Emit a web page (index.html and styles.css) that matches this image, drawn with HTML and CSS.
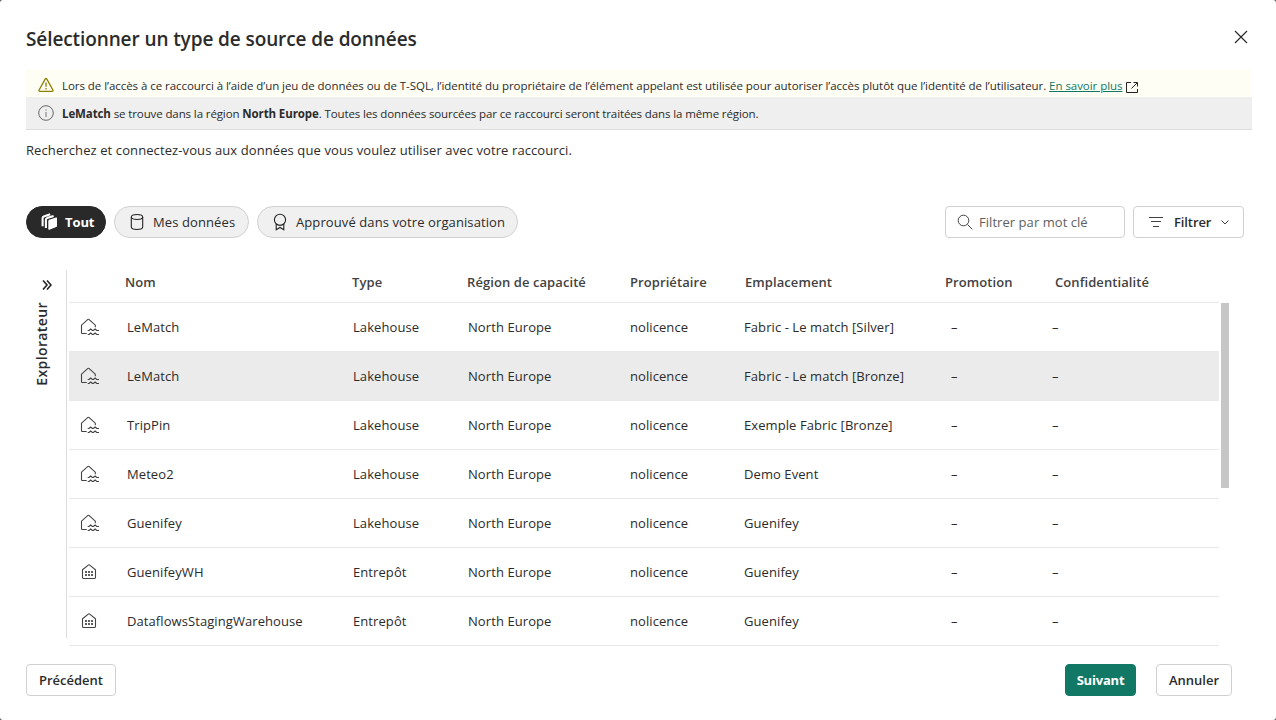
FILE: index.html
```html
<!DOCTYPE html>
<html lang="fr">
<head>
<meta charset="utf-8">
<title>Sélectionner un type de source de données</title>
<link rel="stylesheet" href="styles.css">
</head>
<body>
<svg class="defs" aria-hidden="true">
  <symbol id="lakehouse" viewBox="0 0 20 18"><path d="M7.7 15.5H3.2Q2.5 15.5 2.5 14.8V7.2L8.9 1.4Q9.4 1 9.9 1.4L16.3 7.2V9.3" fill="none" stroke="currentColor" stroke-width="1.1"/><path d="M8.7 12.5h1.3l1.7-1.5 1.7 1.5h1l1.7-1.5 1.7 1.5H20M8.7 16.5h1.3l1.7-1.5 1.7 1.5h1l1.7-1.5 1.7 1.5H20" fill="none" stroke="currentColor" stroke-width="1.2"/></symbol>
  <symbol id="warehouse" viewBox="0 0 20 18"><path d="M3.5 6.7 9.6 1.9Q10 1.6 10.4 1.9L16.5 6.7V14.6Q16.5 15.5 15.6 15.5H4.4Q3.5 15.5 3.5 14.6Z" fill="none" stroke="currentColor" stroke-width="1.1"/><path d="M6 8h2v2H6zM9 8h2v2H9zM12 8h2v2h-2zM6 11h2v2H6zM9 11h2v2H9zM12 11h2v2h-2z" fill="currentColor" fill-opacity=".85"/></symbol>
</svg>
<main class="dialog">
  <header class="dialog-head">
    <h1>Sélectionner un type de source de données</h1>
    <svg class="close" width="14" height="14" viewBox="0 0 14 14"><path d="m1 1 12 12M13 1 1 13"/></svg>
  </header>
  <div class="banner warning">
    <svg width="16" height="16" viewBox="0 0 16 16"><path d="M7.3 1.9Q8 .8 8.7 1.9L14.9 13Q15.4 14.3 14.1 14.4H1.9Q.6 14.3 1.1 13Z" fill="none" stroke="#8a8000" stroke-width="1.3"/><path d="M8 5.5v4.3M8 11v1.5" stroke="#8a8000" stroke-width="1.3"/></svg>
    <p class="warn-text">Lors de l’accès à ce raccourci à l’aide d’un jeu de données ou de T-SQL, l’identité du propriétaire de l’élément appelant est utilisée pour autoriser l’accès plutôt que l’identité de l’utilisateur. <a>En savoir plus</a></p>
    <svg class="external" width="12" height="11" viewBox="0 0 12 11"><path d="M5 .5H.5v10h11V7M7.5.5h4v4M11 1 5.5 6.5"/></svg>
  </div>
  <div class="banner info">
    <svg width="16" height="16" viewBox="0 0 16 16"><circle cx="8" cy="8" r="7.3" fill="none" stroke="#666"/><path d="M8 7v5M8 4.3v1.2" stroke="#777"/></svg>
    <p class="info-text"><b>LeMatch</b> se trouve dans la région <b>North Europe</b>. Toutes les données sourcées par ce raccourci seront traitées dans la même région.</p>
  </div>
  <p class="description">Recherchez et connectez-vous aux données que vous voulez utiliser avec votre raccourci.</p>

  <div class="toolbar">
    <button class="pill active"><svg width="18" height="18" viewBox="0 0 18 18"><path d="M8.3 8Q8.3 7 9.2 6.7L16 4.5Q17 4.2 17 5.2V12.9Q17 13.8 16.2 14.1L9.4 16.7Q8.3 17 8.3 16Z" fill="#fff"/><path d="M5.9 15V6.9Q5.9 5.6 7.1 5.1L13.6 2.9M2.6 13.2V5.2Q2.6 3.9 3.8 3.4L10.2 1.3" fill="none" stroke="#fff" stroke-width="2.1"/></svg><span>Tout</span></button>
    <button class="pill mine"><svg width="14" height="18" viewBox="0 0 14 18"><ellipse cx="7" cy="4" rx="5.7" ry="2.5"/><path d="M1.3 4v10Q1.3 16.5 7 16.5T12.7 14V4"/></svg><span>Mes données</span></button>
    <button class="pill endorsed"><svg width="14" height="18" viewBox="0 0 14 18"><circle cx="7" cy="6.8" r="5.6"/><path d="M3.2 11v5.8L7 14.5l3.8 2.3V11"/></svg><span>Approuvé dans votre organisation</span></button>
    <div class="search"><svg width="16" height="16" viewBox="0 0 16 16"><circle cx="6.5" cy="6.5" r="5.3"/><path d="m10.5 10.5 4.8 4.8"/></svg><span>Filtrer par mot clé</span></div>
    <button class="filter"><svg width="14" height="10" viewBox="0 0 14 10"><path d="M0 .5h14M2 4.5h10M4 9.5h6"/></svg><span>Filtrer</span><svg class="chev" width="8" height="5" viewBox="0 0 8 5"><path d="m.5.5 3.5 3.5L7.5.5"/></svg></button>
  </div>

  <section class="content">
    <aside class="explorer"><svg width="10" height="10" viewBox="0 0 10 10"><path d="m1 .5 4 4.5-4 4.5M5 .5 9 5 5 9.5"/></svg><span>Explorateur</span></aside>
    <div class="table">
      <div class="row head"><span></span><span>Nom</span><span>Type</span><span>Région de capacité</span><span>Propriétaire</span><span>Emplacement</span><span>Promotion</span><span>Confidentialité</span></div>
      <div class="row"><svg><use href="#lakehouse"/></svg><span>LeMatch</span><span>Lakehouse</span><span>North Europe</span><span>nolicence</span><span>Fabric - Le match [Silver]</span><span>–</span><span>–</span></div>
      <div class="row selected"><svg><use href="#lakehouse"/></svg><span>LeMatch</span><span>Lakehouse</span><span>North Europe</span><span>nolicence</span><span>Fabric - Le match [Bronze]</span><span>–</span><span>–</span></div>
      <div class="row"><svg><use href="#lakehouse"/></svg><span>TripPin</span><span>Lakehouse</span><span>North Europe</span><span>nolicence</span><span>Exemple Fabric [Bronze]</span><span>–</span><span>–</span></div>
      <div class="row"><svg><use href="#lakehouse"/></svg><span>Meteo2</span><span>Lakehouse</span><span>North Europe</span><span>nolicence</span><span>Demo Event</span><span>–</span><span>–</span></div>
      <div class="row"><svg><use href="#lakehouse"/></svg><span>Guenifey</span><span>Lakehouse</span><span>North Europe</span><span>nolicence</span><span>Guenifey</span><span>–</span><span>–</span></div>
      <div class="row"><svg><use href="#warehouse"/></svg><span>GuenifeyWH</span><span>Entrepôt</span><span>North Europe</span><span>nolicence</span><span>Guenifey</span><span>–</span><span>–</span></div>
      <div class="row"><svg><use href="#warehouse"/></svg><span>DataflowsStagingWarehouse</span><span>Entrepôt</span><span>North Europe</span><span>nolicence</span><span>Guenifey</span><span>–</span><span>–</span></div>
    </div>
    <div class="scrollbar"></div>
  </section>

  <footer class="actions">
    <button class="previous">Précédent</button>
    <button class="next">Suivant</button>
    <button class="cancel">Annuler</button>
  </footer>
</main>
</body>
</html>
```

FILE: styles.css
```css
* { box-sizing: border-box; }
body { margin: 0; background: #555; font-family: "Open Sans", "Noto Sans", sans-serif; font-size: 13px; color: #2b2b2b; }
h1, p { margin: 0; font-weight: 400; }
button { font: inherit; color: inherit; padding: 0; }
span, p, h1, button { white-space: nowrap; }
svg { flex: none; }
.defs { position: absolute; width: 0; height: 0; }
.dialog { width: 1276px; height: 720px; background: #fff; border-radius: 3px; overflow: hidden; display: flex; flex-direction: column; }

.dialog-head { height: 69px; padding: 9px 28px 0 26px; display: flex; align-items: center; justify-content: space-between; }
h1 { font-size: 19px; font-weight: 600; letter-spacing: -.1px; }
.close { fill: none; stroke: #242424; stroke-width: 1.1; margin-top: -4px; }

.banner { margin: 0 24px 0 26px; padding-left: 12px; display: flex; align-items: center; font-size: 11.5px; }
.banner p { margin-left: 8px; }
.warning { height: 28px; background: #fffef5; padding-top: 4px; }
.warning a { color: #117865; text-decoration: underline; }
.info { height: 33px; background: #efefef; border-bottom: 1px solid #ddd; }
.external { margin: 4px 0 0 4px; fill: none; stroke: #242424; }
.warn-text { letter-spacing: -.05px; }
.info-text { letter-spacing: -.11px; }
.description { height: 76px; padding: 10px 0 0 26px; line-height: 20px; letter-spacing: .1px; }

.toolbar { height: 32px; padding: 0 32px 0 26px; display: flex; gap: 8px; }
.pill { height: 32px; border: 1px solid #d1d1d1; border-radius: 16px; background: #f0f0f0; display: flex; align-items: center; letter-spacing: .1px; }
.pill svg { fill: none; stroke: #242424; stroke-width: 1.1; }
.active { width: 80px; padding-left: 13px; gap: 7px; background: #292929; border-color: #292929; color: #fff; font-weight: 700; letter-spacing: -.1px; }
.active svg { stroke: none; }
.mine { width: 135px; padding-left: 15px; gap: 9px; }
.endorsed { width: 261px; padding-left: 15px; gap: 9px; }
.search { margin-left: auto; width: 180px; height: 32px; border: 1px solid #d1d1d1; border-radius: 4px; display: flex; align-items: center; padding-left: 11px; gap: 6px; color: #616161; letter-spacing: .05px; }
.search svg, .filter svg { fill: none; stroke: #424242; }
.filter { width: 111px; height: 32px; border: 1px solid #d1d1d1; border-radius: 4px; background: #fff; font-weight: 600; display: flex; align-items: center; padding-left: 15px; letter-spacing: -.1px; }
.filter span { margin: 0 10px 0 11px; }

.content { height: 408px; display: flex; padding-top: 32px; }
.explorer { width: 67px; height: 368px; border-right: 1px solid #ddd; display: flex; flex-direction: column; align-items: center; padding: 10px 0 0 27px; gap: 12px; font-size: 14px; font-weight: 600; }
.explorer svg { fill: none; stroke: #242424; stroke-width: 1.6; }
.explorer span { writing-mode: vertical-rl; transform: rotate(180deg); margin-right: 9px; line-height: 20px; letter-spacing: .4px; }
.table { width: 1150px; margin-left: 2px; }
.row { height: 49px; display: grid; grid-template-columns: 58px 226px 115px 162px 114px 207px 101px 1fr; align-items: center; border-bottom: 1px solid #e8e8e8; letter-spacing: .08px; }
.row svg { width: 20px; height: 18px; margin-left: 10px; color: #424242; }
.head { height: 33px; grid-template-columns: 56px 227px 115px 163px 115px 200px 110px 1fr; padding-bottom: 8px; font-weight: 600; color: #424242; }
.selected { background: #ebebeb; }
.scrollbar { width: 8px; height: 185px; margin: 33px 0 0 2px; background: #c6c6c6; }

.actions { padding: 18px 44px 0 26px; display: flex; }
.actions button { height: 32px; border: 1px solid #d1d1d1; border-radius: 4px; background: #fff; font-weight: 600; }
.actions .previous { width: 90px; }
.actions .next { width: 71px; margin-left: auto; margin-right: 20px; background: #117865; border-color: #117865; color: #fff; font-weight: 700; letter-spacing: -.2px; }
.actions .cancel { width: 76px; }
```
